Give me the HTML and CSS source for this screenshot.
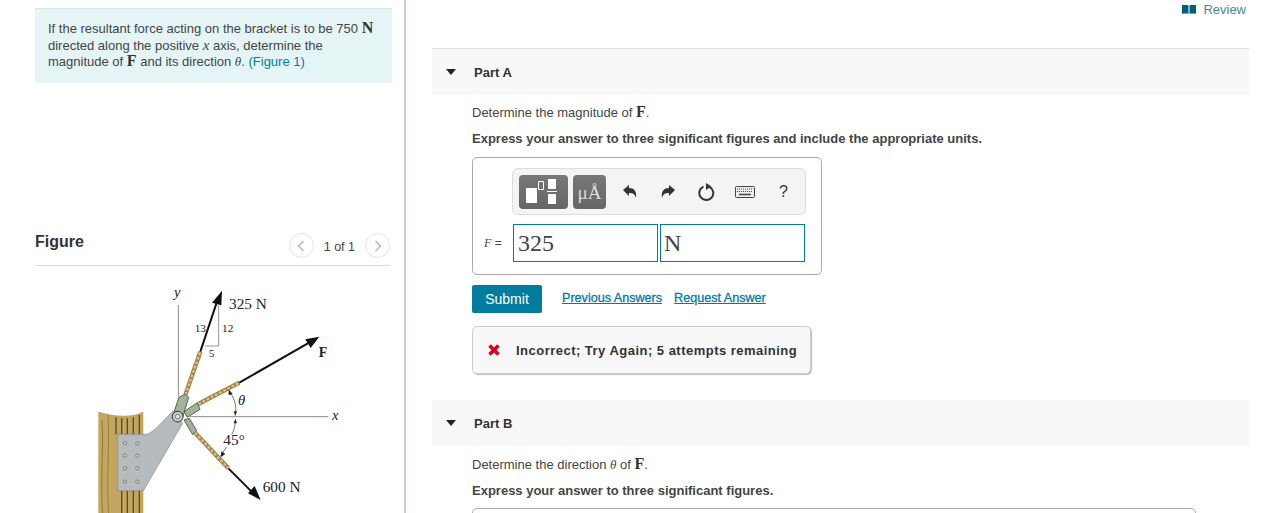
FILE: index.html
```html
<!DOCTYPE html>
<html lang="en">
<head>
<meta charset="utf-8">
<title>Bracket problem</title>
<link rel="stylesheet" href="styles.css">
</head>
<body>
<div class="page">
  <aside class="left">
    <div class="prompt">If the resultant force acting on the bracket is to be 750 <b class="m">N</b> directed along the positive <i class="v vx">x</i> axis, determine the magnitude of <b class="m">F</b> and its direction <i class="v">θ</i>. <span class="link">(Figure 1)</span></div>
    <div class="fighead">
      <span class="figtitle">Figure</span>
      <div class="pager">
        <span class="circle"><svg width="8" height="12" viewBox="0 0 8 12"><path d="M6.500 1 1.500 6l5 5" fill="none" stroke="#bbb" stroke-width="1.600"/></svg></span>
        <span class="count">1 of 1</span>
        <span class="circle"><svg width="8" height="12" viewBox="0 0 8 12"><path d="M1.500 1 6.500 6l-5 5" fill="none" stroke="#bbb" stroke-width="1.600"/></svg></span>
      </div>
    </div>
    <svg class="diagram" width="280" height="233" viewBox="0 0 840 699">
      <path d="M55 395c40 12 95 20 135 0V699H55z" fill="#c2a65f"/>
      <path d="M66 420C72 500 60 600 68 699M84 405C90 500 78 600 86 699" stroke="#9a7f3c" stroke-width="3" fill="none"/>
      <path d="M108 412V463M125 415V463M142 415V463M160 412V463M178 405V463M125 632V699M142 632V699M160 632V699M178 632V699" stroke="#5d4a20" stroke-width="4" fill="none"/>
      <path d="M295 75V350M330 410H745" stroke="#8b8b8b" stroke-width="3" fill="none"/>
      <path d="M113 463H200C225 455 250 420 280 393L308 430 190 632H113z" fill="#b7bbbd" stroke="#85888a" stroke-width="2"/>
      <g fill="#d5d8d8" stroke="#555" stroke-width="2">
        <circle cx="135" cy="490" r="5"/><circle cx="172" cy="490" r="5"/>
        <circle cx="135" cy="527" r="5"/><circle cx="172" cy="527" r="5"/>
        <circle cx="135" cy="565" r="5"/><circle cx="172" cy="565" r="5"/>
        <circle cx="135" cy="605" r="5"/><circle cx="172" cy="605" r="5"/>
      </g>
      <path d="M375 198H416V75" fill="none" stroke="#666" stroke-width="2"/>
      <path d="M316 345 361 215M355 372 478 308M345 458 445 565" stroke="#a07f45" stroke-width="13" fill="none"/>
      <path d="M316 345 361 215M355 372 478 308M345 458 445 565" stroke="#d9c090" stroke-width="7" stroke-dasharray="9 5" fill="none"/>
      <path d="M361 215 412 62M478 308 694 184M445 565 520 640" stroke="#111" stroke-width="6" fill="none"/>
      <path d="M426 32 396 68 424 76zM718 170 676 178 692 204zM542 660 504 640 524 618z" fill="#111"/>
      <path d="M297 352 316 342 326 352 308 412 282 396zM312 395 352 368 360 388 322 412zM312 420 328 415 350 452 338 464z" fill="#9fb59a" stroke="#3e4a3c" stroke-width="2.500"/>
      <circle cx="293" cy="410" r="16" fill="#c9d2c8" stroke="#2f2f2f" stroke-width="3"/>
      <circle cx="293" cy="410" r="7" fill="#e8e8e8" stroke="#444" stroke-width="2"/>
      <path d="M450 336C465 360 470 380 466 402M466 422C465 440 462 452 455 464M440 500 422 528" fill="none" stroke="#333" stroke-width="2"/>
      <path d="M446 328 458 342 446 346zM422 532 424 514 436 522zM466 408 461 394 471 394zM466 416 461 430 471 430z" fill="#222"/>
      <g class="dt">
        <text x="447" y="86" font-size="46">325 N</text>
        <text x="548" y="636" font-size="46">600 N</text>
        <text x="430" y="494" font-size="46">45°</text>
        <text x="344" y="155" font-size="34">13</text>
        <text x="426" y="157" font-size="34">12</text>
        <text x="386" y="232" font-size="34">5</text>
        <text x="716" y="232" font-size="42" font-weight="700">F</text>
        <text x="282" y="52" font-size="44" font-style="italic">y</text>
        <text x="756" y="420" font-size="44" font-style="italic">x</text>
        <text x="474" y="374" font-size="44" font-style="italic">θ</text>
      </g>
    </svg>
  </aside>
  <main class="right">
    <div class="review">
      <svg width="14" height="9" viewBox="0 0 14 9"><path d="M0 0c2-.6 5-.6 6.500.5V9C5 8.400 2 8.400 0 9zM14 0c-2-.6-5-.6-6.500.5V9c1.500-.6 4.500-.6 6.500 0z" fill="#00607c"/></svg>
      <span>Review</span>
    </div>
    <section class="part parta">
      <span class="caret"></span><span class="parttitle">Part A</span>
    </section>
    <div class="body">
      <p class="q">Determine the magnitude of <b class="m">F</b>.</p>
      <p class="hint">Express your answer to three significant figures and include the appropriate units.</p>
      <div class="answer">
        <div class="toolbar">
          <span class="tbtn wide">
            <svg width="49" height="34" viewBox="0 0 49 34"><path fill="#fff" d="M7 13h11v15H7zM29 4h8v10h-8zM29 19h8v10h-8zM28 16h10v1h-10z"/><path fill="none" stroke="#fff" d="M19.500 6.500h5v8h-5z"/></svg>
          </span>
          <span class="tbtn unit">μÅ</span>
          <span class="tool"><svg width="16" height="16" viewBox="0 0 16 16"><path d="M1 6 7 1v3c5 0 8 3 7 10-1-4-3-5-7-5v3z" fill="#333"/></svg></span>
          <span class="tool"><svg width="16" height="16" viewBox="0 0 16 16"><path d="M15 6 9 1v3C4 4 1 7 2 14c1-4 3-5 7-5v3z" fill="#333"/></svg></span>
          <span class="tool"><svg width="18" height="18" viewBox="0 0 18 18"><path d="M11.500 3.800A7 7 0 1 1 5.500 3.600" fill="none" stroke="#333" stroke-width="2"/><path d="M8 0l5.500 3.500L8 7z" fill="#333"/></svg></span>
          <span class="tool"><svg width="20" height="12" viewBox="0 0 20 12"><rect x=".5" y=".5" width="19" height="11" rx="1" fill="#eee" stroke="#444"/><path d="M2 3h16M2 5.500h16" stroke="#444" stroke-dasharray="1 1"/><path d="M4 8.500h12" stroke="#444" stroke-width="1.500"/></svg></span>
          <span class="tool help">?</span>
        </div>
        <div class="inputs">
          <span class="lbl"><i>F</i> =</span>
          <span class="field">325</span>
          <span class="field gap">N</span>
        </div>
      </div>
      <div class="actions">
        <span class="submit">Submit</span>
        <span class="alink first">Previous Answers</span>
        <span class="alink">Request Answer</span>
      </div>
      <div class="feedback">
        <svg width="14" height="14" viewBox="0 0 14 14"><path d="M2.500 2.500l9 9M11.500 2.500l-9 9" stroke="#d9001b" stroke-width="3.600"/></svg>
        <span>Incorrect; Try Again; 5 attempts remaining</span>
      </div>
    </div>
    <section class="part partb">
      <span class="caret"></span><span class="parttitle">Part B</span>
    </section>
    <div class="body">
      <p class="q">Determine the direction <i class="v">θ</i> of <b class="m">F</b>.</p>
      <p class="hint">Express your answer to three significant figures.</p>
      <div class="answer2"></div>
    </div>
  </main>
</div>
</body>
</html>
```

FILE: styles.css
```css
* { box-sizing: border-box; }
html, body { margin: 0; height: 513px; overflow: hidden; background: #fff; }
body { font-family: "Liberation Sans", Arial, sans-serif; color: #333; font-size: 13px; }
.page { display: flex; height: 513px; overflow: hidden; }
.left { width: 406px; flex: none; padding: 8px 12px 0 35px; border-right: 2px solid #c3cfe2; }
.prompt { height: 75px; background: #e5f5f6; border-top: 1px solid #d9e2e6; padding: 12px 13px 0; line-height: 16.500px; font-size: 13px; color: #444; }
.m { font-family: "Liberation Serif", serif; font-weight: 700; font-size: 16px; line-height: 14px; color: #333; }
.v { font-family: "Liberation Serif", serif; font-style: italic; }
.vx { font-size: 15px; line-height: 14px; }
.link { color: #007c9e; }
.fighead { display: flex; justify-content: space-between; align-items: center; height: 33px; margin-top: 150px; border-bottom: 1px solid #ddd; padding-bottom: 7px; width: 355px; }
.figtitle { font-size: 16px; font-weight: 700; color: #333; margin-bottom: 8px; }
.pager { display: flex; align-items: center; }
.count { font-size: 12.500px; margin: 2px 10px 0; color: #444; }
.circle { width: 25px; height: 25px; border: 1px solid #e2e2e2; border-radius: 50%; display: flex; align-items: center; justify-content: center; }
.diagram { display: block; margin: 14px 0 0 45px; }
.dt text { font-family: "Liberation Serif", serif; fill: #222; }
.right { flex: 1; padding: 0 20px 0 26px; min-width: 0; }
.review { height: 48px; display: flex; justify-content: flex-end; align-items: flex-start; gap: 7px; padding: 2px 3px 0 0; font-size: 13px; color: #4a8497; }
.review svg { margin-top: 3px; }
.part { height: 47px; background: #f8f8f8; display: flex; align-items: center; padding-left: 14px; }
.parta { border-top: 1px solid #ddd; }
.partb { height: 46px; }
.caret { width: 0; height: 0; border-left: 5.500px solid transparent; border-right: 5.500px solid transparent; border-top: 6px solid #222; }
.parttitle { margin-left: 18px; font-weight: 700; font-size: 13px; color: #333; }
.body { padding-left: 40px; }
.q { margin: 0; padding-top: 9px; height: 35px; line-height: 17px; font-size: 13px; color: #444; }
.hint { margin: 0; height: 27px; line-height: 17px; font-weight: 700; font-size: 13px; color: #444; }
.answer { width: 350px; height: 118px; border: 1px solid #aaa; border-radius: 5px; padding: 10px 0 0 39px; }
.toolbar { width: 294px; height: 47px; background: #f4f4f4; border: 1px solid #ddd; border-radius: 6px; display: flex; align-items: center; padding-left: 6px; }
.tbtn { height: 34px; background: linear-gradient(#777, #666); border-radius: 4px; display: flex; align-items: center; justify-content: center; color: #ddd; }
.wide { width: 49px; }
.unit { width: 33px; margin-left: 5px; margin-right: 5px; font-family: "Liberation Serif", serif; font-size: 19px; padding-top: 3px; }
.tool { width: 38.300px; display: flex; justify-content: center; align-items: center; color: #333; }
.help { font-size: 16px; }
.inputs { display: flex; align-items: center; margin: 9px 0 0 -28px; }
.lbl { width: 29px; font-size: 12px; color: #444; white-space: nowrap; }
.lbl i { font-family: "Liberation Serif", serif; }
.field { width: 145px; height: 38px; border: 1px solid #007c9e; font-family: "Liberation Serif", serif; font-size: 24px; line-height: 36px; padding-left: 4px; color: #444; }
.gap { margin-left: 2px; padding-left: 3px; }
.actions { display: flex; align-items: flex-start; margin-top: 10px; }
.submit { width: 70px; height: 28px; background: #007c9e; color: #fff; border-radius: 2px; font-size: 14px; display: flex; align-items: center; justify-content: center; }
.alink { color: #007c9e; text-decoration: underline; font-size: 12.600px; -webkit-text-stroke: .3px #007c9e; margin: 5px 0 0 12px; line-height: 16px; }
.alink.first { margin-left: 20px; }
.feedback { width: 339px; height: 48px; margin-top: 13px; margin-bottom: 26px; background: #f8f8f8; border: 1px solid #ccc; border-radius: 5px; box-shadow: 1px 1px 1px #bbb; display: flex; align-items: center; padding-left: 14px; gap: 15px; font-weight: 700; font-size: 13px; color: #333; letter-spacing: .48px; }
.partb + .body .q { padding-top: 10px; height: 36px; }
.answer2 { width: 724px; height: 20px; border: 1px solid #aaa; border-radius: 5px; margin-top: -1px; }
```
